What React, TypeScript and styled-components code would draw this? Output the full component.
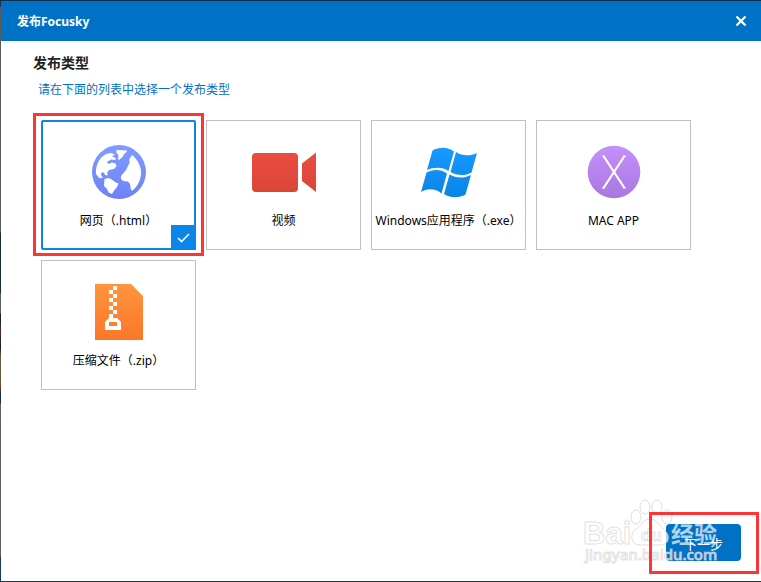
import React, { useState } from "react";
import styled, { createGlobalStyle } from "styled-components";

const GlobalStyle = createGlobalStyle`
  *, *::before, *::after { box-sizing: border-box; }
  body {
    margin: 0;
    background: #fff;
    color: #000;
    font: 12px/18px "Noto Sans", "Noto Sans CJK SC", sans-serif;
  }
  button { font: inherit; border: 0; padding: 0; cursor: pointer; }
`;

const Desktop = styled.div`
  display: flex;
  min-height: 100vh;
  padding: 1px 0 1px 1px;
  background:
    linear-gradient(#10304c, #10304c) top / 100% 1px no-repeat,
    linear-gradient(#17395a, #17395a) bottom / 100% 1px no-repeat,
    linear-gradient(
      #17324a 0 6px, #5a5a5a 7px 40px, #5c5c5c 232px, #10303c 233px 293px,
      #606060 294px 313px, #1a2430 314px 322px, #5a2c20 330px, #1c1a24 348px,
      #6b5c3c 356px 380px, #7a4526 386px, #1a3038 392px 403px,
      #606060 404px 556px, #17395a 557px
    ) left / 1px 100% no-repeat;
`;

const Dialog = styled.main`
  flex: 1;
  display: flex;
  flex-direction: column;
  background: #fff;
`;

const TitleBar = styled.header`
  display: flex;
  align-items: center;
  justify-content: space-between;
  height: 40px;
  padding: 0 12px 0 16px;
  background: #0072c6;
  color: #fff;
`;

const Title = styled.h1`
  margin: 0;
  padding-top: 2px;
  font-size: 12px;
  font-weight: 700;
  line-height: 20px;
`;

const CloseButton = styled.button`
  display: flex;
  align-items: center;
  justify-content: center;
  width: 16px;
  height: 16px;
  background: none;
  color: #fff;
`;

const Content = styled.form`
  flex: 1;
  display: flex;
  flex-direction: column;
  padding: 12px 20px 20px 32px;
`;

const Heading = styled.h2`
  margin: 0;
  font-size: 14px;
  font-weight: 700;
  line-height: 20px;
  color: #222;
`;

const Hint = styled.p`
  margin: 7px 0 0 5px;
  line-height: 20px;
  color: #0072c6;
`;

const Options = styled.div`
  display: flex;
  flex-wrap: wrap;
  gap: 10px;
  margin: 20px 0 0 8px;
`;

const Card = styled.label<{ $selected: boolean }>`
  position: relative;
  display: flex;
  flex-direction: column;
  align-items: center;
  width: 155px;
  height: 130px;
  padding-top: 20px;
  background: #fff;
  box-shadow: inset 0 0 0 ${(p) => (p.$selected ? "2px #0a86e8" : "1px #c0c0c0")};
  border-radius: ${(p) => (p.$selected ? "2px" : "0")};
  white-space: nowrap;
  cursor: pointer;
`;

const Radio = styled.input`
  position: absolute;
  inset: 0;
  width: 100%;
  height: 100%;
  margin: 0;
  opacity: 0;
  cursor: pointer;
`;

const Picture = styled.svg`
  display: block;
  width: 64px;
  height: 64px;
  margin-bottom: 8px;
`;

const Tick = styled.span`
  position: absolute;
  right: 0;
  bottom: 0;
  display: flex;
  align-items: center;
  justify-content: center;
  width: 25px;
  height: 25px;
  background: #0a86e8;
`;

const Marker = styled.span<{ $inset: string }>`
  position: absolute;
  inset: ${(p) => p.$inset};
  border: 3px solid #ff3535;
  pointer-events: none;
`;

const Footer = styled.footer`
  display: flex;
  justify-content: flex-end;
  margin-top: auto;
`;

const NextArea = styled.div`
  position: relative;
`;

const NextButton = styled.button`
  width: 75px;
  height: 37px;
  padding-top: 2px;
  border-radius: 4px;
  background: #0072c6;
  color: #fff;
  font-size: 13px;
`;

const Stamp = styled.svg`
  position: absolute;
  right: 20px;
  bottom: -8px;
  width: 140px;
  height: 72px;
  overflow: visible;
  pointer-events: none;
`;

function Globe() {
  return (
    <Picture viewBox="0 0 64 64" aria-hidden="true">
      <defs>
        <linearGradient id="globe" x2="0" y2="1">
          <stop stopColor="#809cff" />
          <stop offset="1" stopColor="#6d82f5" />
        </linearGradient>
      </defs>
      <circle cx="32" cy="32" r="27" fill="url(#globe)" />
      <g fill="#fff">
        <path d="M19 14C12 18 8.500 25 9 34L12 38H16L14 35L14.500 32.500L17 32.500L18 35L21 35.500L20 33L22 30L27 29L29.500 26L28.500 23.500L25 22.500L21.500 24L20 22L24 19.500L28 20L29 18L25 16.500L28 14.500L24 13Z" />
        <path d="M29.500 10L40 10.500L39.500 12L37 14L35.500 17L32 20L31 19L31.500 15L29.500 13Z" />
        <path d="M45 15L42 20L43 22L41.500 25L39 30L34 36V39L36 41L41 41.500L43 44L44 50L45.500 50.500C51 46 54.500 39 54 31C53.500 25 50 19 45 15Z" />
        <path d="M17.500 39L21 38L24 39L28 42L31.500 43.500L30 47L27.500 50L25 54L21.500 52.500L20 49L17 46Z" />
      </g>
    </Picture>
  );
}

function Camera() {
  return (
    <Picture viewBox="0 0 64 64" aria-hidden="true">
      <defs>
        <linearGradient id="camera" x2="0" y2="1">
          <stop stopColor="#ea4d40" />
          <stop offset="1" stopColor="#d94637" />
        </linearGradient>
      </defs>
      <rect x="0" y="13" width="46" height="39" rx="4" fill="url(#camera)" />
      <path d="M50 23.500L64 12.500V52L50 41Z" fill="url(#camera)" />
    </Picture>
  );
}

function WindowsFlag() {
  return (
    <Picture viewBox="0 0 64 64" aria-hidden="true">
      <defs>
        <linearGradient id="flag" gradientUnits="userSpaceOnUse" x1="0" y1="8" x2="0" y2="57">
          <stop stopColor="#189aff" />
          <stop offset="1" stopColor="#0984e5" />
        </linearGradient>
      </defs>
      <g fill="url(#flag)">
        <path d="M15.500 10.500C21.500 7 30.500 6.500 37 11.500L31.500 31C25.500 26.500 16.500 27 10 30Z" />
        <path d="M39 12C45.500 16.500 53.500 16 60 13L54.500 32.500C48.500 36 40 36 33.500 32Z" />
        <path d="M9.500 32.500C16 29 24 29 30 33.500L24.500 53.500C18.500 48.500 10.500 48 4 52Z" />
        <path d="M32.500 34.500C39 38.500 47.500 38.500 54 35L48.500 54.500C41.500 58.500 33.500 58 27 54Z" />
      </g>
    </Picture>
  );
}

function MacDisc() {
  return (
    <Picture viewBox="0 0 64 64" aria-hidden="true">
      <defs>
        <linearGradient id="disc" x2="0" y2="1">
          <stop stopColor="#c491fc" />
          <stop offset="1" stopColor="#a877e0" />
        </linearGradient>
      </defs>
      <circle cx="32" cy="32" r="26.300" fill="url(#disc)" />
      <path d="M21.500 16L42.500 48M42.500 16L21.500 48" stroke="#fff" strokeWidth="2.200" />
      <path d="M20 16H23M41 16H44M20 48H23M41 48H44" stroke="#fff" />
    </Picture>
  );
}

function ZipFile() {
  return (
    <Picture viewBox="0 0 64 64" aria-hidden="true">
      <defs>
        <linearGradient id="zip" x2="0" y2="1">
          <stop stopColor="#ff943f" />
          <stop offset="1" stopColor="#fa7828" />
        </linearGradient>
      </defs>
      <path d="M8 4H44L56 16V60H8Z" fill="url(#zip)" />
      <path
        d="M26 6h4v4h-4zM22 10h4v4h-4zM26 14h4v4h-4zM22 18h4v4h-4zM26 22h4v4h-4zM22 26h4v4h-4zM26 30h4v4h-4zM22 34h4v4h-4z"
        fill="#fff"
      />
      <path d="M22 38H30L34 42V50H18V42ZM22 42V46H30V42Z" fill="#fff" fillRule="evenodd" />
    </Picture>
  );
}

function Watermark() {
  return (
    <Stamp viewBox="0 0 140 72" aria-hidden="true">
      <g fill="#fff" fillOpacity="0.7" stroke="#d4d4d4" strokeOpacity="0.8" strokeWidth="1">
        <ellipse cx="55" cy="20" rx="5" ry="7" />
        <ellipse cx="64" cy="10" rx="5" ry="7" />
        <ellipse cx="76" cy="10" rx="5" ry="7" />
        <ellipse cx="86" cy="20" rx="5" ry="7" />
        <path d="M69 22C62 22 60 29 54 33C48 38 51 48 58 48C64 48 74 48 80 48C88 48 90 38 83 33C78 29 76 22 69 22Z" />
      </g>
      <g
        fill="#fff"
        fillOpacity="0.7"
        stroke="#d4d4d4"
        strokeOpacity="0.7"
        strokeWidth="1"
        fontFamily="'Liberation Sans', 'Noto Sans CJK SC', sans-serif"
        fontWeight="700"
      >
        <text x="2" y="47" fontSize="31">Bai</text>
        <text x="60" y="44" fontSize="17">du</text>
        <text x="90" y="46" fontSize="23" stroke="none">经验</text>
        <text x="4" y="63" fontSize="15" fontWeight="500" fontFamily="'Noto Sans', sans-serif">
          jingyan.baidu.com
        </text>
      </g>
    </Stamp>
  );
}

const publishTypes = [
  { id: "html", label: "网页（.html）", Icon: Globe },
  { id: "video", label: "视频", Icon: Camera },
  { id: "exe", label: "Windows应用程序（.exe）", Icon: WindowsFlag },
  { id: "mac", label: "MAC APP", Icon: MacDisc },
  { id: "zip", label: "压缩文件（.zip）", Icon: ZipFile },
];

export default function App() {
  const [selected, setSelected] = useState("html");

  return (
    <>
      <GlobalStyle />
      <Desktop>
        <Dialog>
          <TitleBar>
            <Title>发布Focusky</Title>
            <CloseButton type="button" aria-label="关闭">
              <svg width="12" height="10" viewBox="0 0 12 10" aria-hidden="true">
                <path d="M1.500 .5L10.500 9.500M10.500 .5L1.500 9.500" stroke="currentColor" strokeWidth="2.200" />
              </svg>
            </CloseButton>
          </TitleBar>
          <Content onSubmit={(e) => e.preventDefault()}>
            <Heading>发布类型</Heading>
            <Hint>请在下面的列表中选择一个发布类型</Hint>
            <Options role="radiogroup" aria-label="发布类型">
              {publishTypes.map(({ id, label, Icon }) => (
                <Card key={id} $selected={selected === id}>
                  <Radio
                    type="radio"
                    name="publish-type"
                    value={id}
                    checked={selected === id}
                    onChange={() => setSelected(id)}
                  />
                  <Icon />
                  <span>{label}</span>
                  {selected === id && (
                    <Tick>
                      <svg width="13" height="10" viewBox="0 0 13 10" aria-hidden="true">
                        <path d="M1 5L4.500 8.500L12 1" fill="none" stroke="#fff" strokeWidth="1.600" />
                      </svg>
                    </Tick>
                  )}
                  {id === "html" && <Marker $inset="-7px -8px -6px -8px" />}
                </Card>
              ))}
            </Options>
            <Footer>
              <NextArea>
                <NextButton type="submit">下一步</NextButton>
                <Watermark />
                <Marker $inset="-12px -18px -13px -17px" />
              </NextArea>
            </Footer>
          </Content>
        </Dialog>
      </Desktop>
    </>
  );
}
